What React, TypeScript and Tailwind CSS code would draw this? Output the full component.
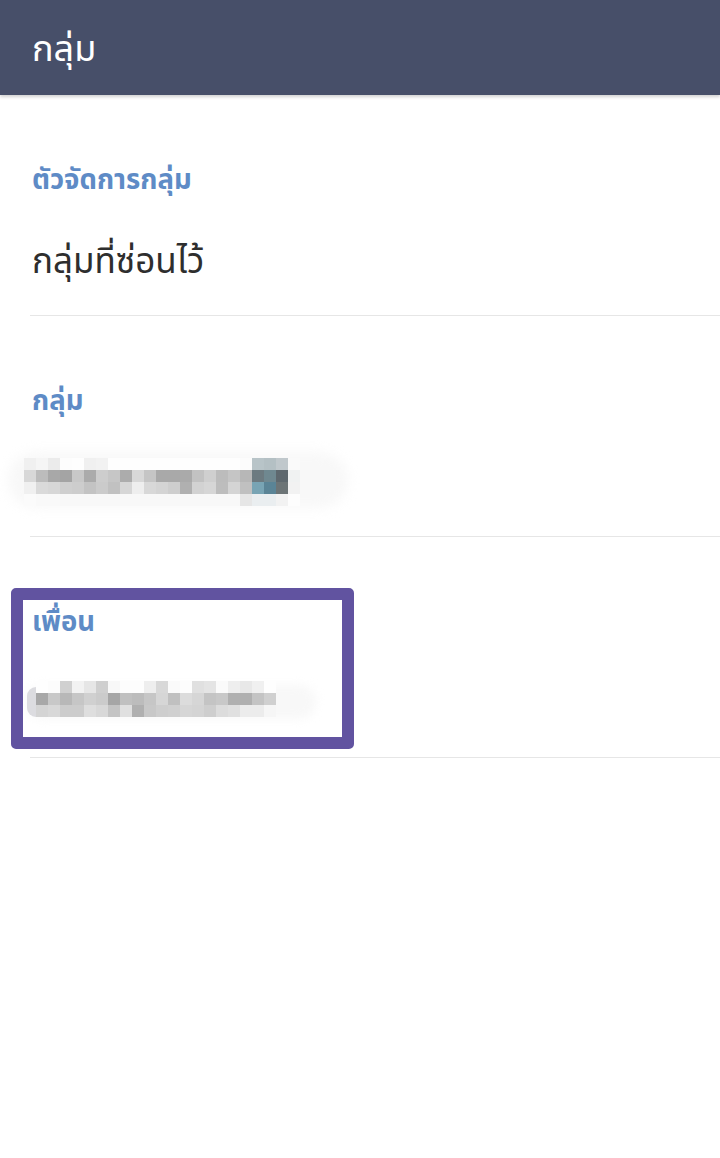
import React from "react";

const FONT = { fontFamily: '"Noto Sans", "Noto Sans Thai", "DejaVu Sans", sans-serif' };

const blurA: string[][] = [
  ["#f0f0f0","#f5f5f5","#ebebeb","#fdfdfd","#fefefe","#f0f0f0","#f2f2f2","#fefefe","#fefefe","#fefefe","#fefefe","#fefefe","#fefefe","#fefefe","#fefefe","#fefefe","#fefefe","#fefefe","#fcfcfc","#b8c4c8","#b4c0c4","#c0c8cc","#fafafa"],
  ["#d8d8d8","#bcbcbc","#a8a8a8","#a4a4a4","#c8c8c8","#ababab","#cdcdcd","#c6c6c6","#acacac","#d8d8d8","#c5c5c5","#a9a9a9","#a9a9a9","#aaaaaa","#c2c2c2","#cfcfcf","#bcbcbc","#c5c5c5","#b7b7b7","#6c7a80","#6f8890","#5e686e","#f0f2f2"],
  ["#f0f0f0","#dadada","#d7d7d7","#cfcfcf","#cdcdcd","#c3c3c3","#cbcbcb","#c1c1c1","#d6d6d6","#eeeeee","#d8d8d8","#d4d4d4","#cecece","#b0b0b0","#d2d2d2","#d6d6d6","#bdbdbd","#d4d4d4","#c0c0c0","#78a4b4","#5a8496","#6c7476","#f2f2f2"],
  ["#fbfbfb","#f9f9f9","#f9f9f9","#f8f8f8","#f8f8f8","#f8f8f8","#f8f8f8","#f8f8f8","#f8f8f8","#f8f8f8","#f8f8f8","#f8f8f8","#f8f8f8","#f8f8f8","#f8f8f8","#f8f8f8","#f8f8f8","#f8f8f8","#e6e6e6","#eaeef0","#eaeef0","#f2f2f2","#fdfdfd"],
];

const blurB: string[][] = [
  ["#fefefe","#fcfcfc","#d0d0d0","#f2f2f2","#e6e6e6","#cfcfcf","#f8f8f8","#fdfdfd","#fdfdfd","#eeeeee","#d8d8d8","#fafafa","#fdfdfd","#e0e0e0","#e4e4e4","#fafafa","#eeeeee","#e8e8e8","#f0f0f0","#fefefe"],
  ["#a8a8a8","#c8c8c8","#b8b8b8","#c6c6c6","#d0d0d0","#cbcbcb","#a6a6a6","#c0c0c0","#bcbcbc","#c6c6c6","#d6d6d6","#c0c0c0","#dcdcdc","#d6d6d6","#c4c4c4","#c8c8c8","#b0b0b0","#b0b0b0","#c4c4c4","#d0d0d0"],
  ["#d4d4d4","#d8d8d8","#cccccc","#cccccc","#dedede","#d8d8d8","#c4c4c4","#e0e0e0","#b0b0b0","#c8c8c8","#cecece","#d0d0d0","#d6d6d6","#d4d4d4","#cecece","#dcdcdc","#e0e0e0","#ececec","#ececec","#f6f6f6"],
];

function Pixels({ rows }: { rows: string[][] }) {
  return (
    <div className="flex flex-col">
      {rows.map((r, i) => (
        <div key={i} className="flex">
          {r.map((c, j) => (
            <div key={j} className="w-[12px] h-[12px]" style={{ backgroundColor: c }} />
          ))}
        </div>
      ))}
    </div>
  );
}

function Section({ label, children }: { label: string; children: React.ReactNode }) {
  return (
    <div className="h-[221px] flex flex-col">
      <div className="pt-[66px] pl-[32px] h-[103px]">
        <div className="text-[27.5px] leading-[36px] font-bold text-[#5e8bc6] whitespace-nowrap" style={FONT}>
          {label}
        </div>
      </div>
      <div className="flex-1 relative">{children}</div>
      <div className="ml-[30px] h-[1px] bg-[#e6e6e6]" />
    </div>
  );
}

export default function App() {
  return (
    <div className="w-[720px] h-[1158px] bg-white relative overflow-hidden" style={FONT}>
      <div className="h-[95px] bg-[#474f69] flex items-center pl-[32px] relative z-10 shadow-[0_2px_3px_rgba(0,0,0,0.18)]">
        <span className="text-white text-[36px] leading-[44px]">กลุ่ม</span>
      </div>

      <Section label="ตัวจัดการกลุ่ม">
        <div className="pt-[40px] pl-[32px] text-[35px] leading-[44px] text-[#2e2e2e] whitespace-nowrap">
          กลุ่มที่ซ่อนไว้
        </div>
      </Section>

      <Section label="กลุ่ม">
        <div className="pt-[39px] pl-[24px] flex">
          <div className="relative">
            <div className="absolute -left-[16px] -top-[6px] w-[340px] h-[56px] rounded-[30px] bg-[#f8f8f8] blur-[6px]" />
            <div className="relative">
              <Pixels rows={blurA} />
            </div>
          </div>
        </div>
      </Section>

      <Section label="เพื่อน">
        <div className="pt-[41px] pl-[36px] flex">
          <div className="relative">
            <div className="absolute -left-[10px] top-[4px] w-[290px] h-[34px] rounded-[18px] bg-[#f8f8f8] blur-[5px]" />
            <div className="absolute -left-[9px] top-[6px] w-[18px] h-[30px] rounded-full bg-[#dcdce0]" />
            <div className="relative">
              <Pixels rows={blurB} />
            </div>
          </div>
        </div>
      </Section>

      <div className="absolute left-[11px] top-[588px] w-[343px] h-[161px] border-[12px] border-[#6153a0] rounded-[5px]" />
    </div>
  );
}
